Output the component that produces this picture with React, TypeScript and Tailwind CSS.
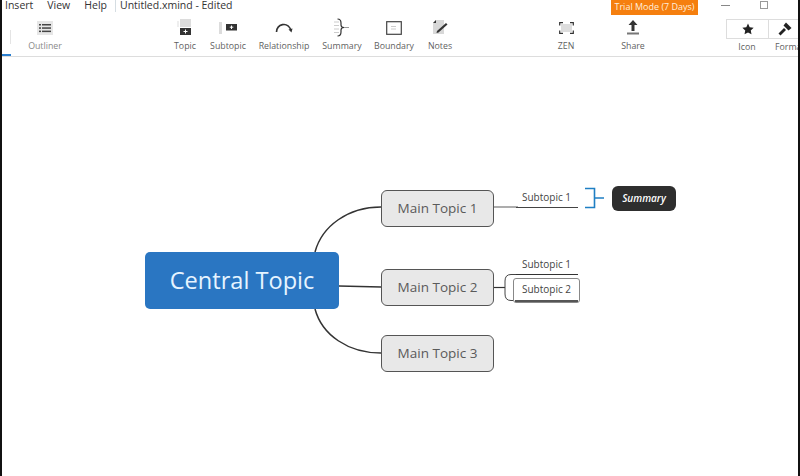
const ui = { fontFamily: '"Open Sans", "Noto Sans", sans-serif' };

function Tool({ label, width, icon, dim }: { label: string; width: string; icon: React.ReactNode; dim?: boolean }) {
  return (
    <div className={`flex flex-col items-center shrink-0 ${width}`}>
      <div className="h-[21px] flex items-center justify-center">{icon}</div>
      <span className={`text-[8.8px] leading-[13px] mt-[2px] whitespace-nowrap ${dim ? "text-[#8a8a8a]" : "text-[#5f5f5f]"}`}>{label}</span>
    </div>
  );
}

function MainTopic({ label, className }: { label: string; className: string }) {
  return (
    <div className={`absolute left-[379px] w-[113px] h-[37px] rounded-[6px] border border-[#555] bg-[#e8e8e8] flex items-center justify-center pb-[1px] text-[13.5px] text-[#5a5a5a] ${className}`}>
      {label}
    </div>
  );
}

export default function App() {
  return (
    <div className="w-[800px] h-[476px] overflow-hidden bg-white flex flex-col border-l-2 border-r-2 border-[#111]" style={ui}>
      <div className="h-[17px] shrink-0 flex items-start text-[10.5px] leading-[11px] text-[#333] relative pl-[3px]">
        <span>Insert</span>
        <span className="ml-[14px]">View</span>
        <span className="ml-[14px]">Help</span>
        <span className="ml-[8px] w-px h-[12px] bg-[#d5dde2]"></span>
        <span className="ml-[4px]">Untitled.xmind - Edited</span>
        <div className="absolute left-[609px] top-0 w-[87px] h-[15px] bg-[#f57f0f] text-[#ffeedd] text-[9px] leading-[14px] text-center">Trial Mode (7 Days)</div>
        <div className="absolute left-[719px] top-[5px] w-[9px] h-px bg-[#888]"></div>
        <div className="absolute left-[758px] top-[1px] w-[8px] h-[8px] border border-[#999]"></div>
      </div>

      <div className="h-[40px] shrink-0 flex items-start border-b border-[#ddd] relative">
        <div className="absolute left-0 bottom-0 w-[9px] h-[2px] bg-[#2a7fd0]"></div>
        <div className="w-px h-[14px] bg-[#e4e4e4] mt-[13px] ml-[8px] shrink-0"></div>
        <div className="ml-[11px] shrink-0">
          <Tool label="Outliner" width="w-[46px]" dim icon={
            <svg width="16" height="14" viewBox="0 0 16 14"><rect width="16" height="14" fill="#e6e6e6" /><g fill="#444"><rect x="2" y="3" width="2" height="1.5" /><rect x="5" y="3" width="9" height="1.5" /><rect x="2" y="6.3" width="2" height="1.5" /><rect x="5" y="6.3" width="9" height="1.5" /><rect x="2" y="9.6" width="2" height="1.5" /><rect x="5" y="9.6" width="9" height="1.5" /></g></svg>
          } />
        </div>
        <div className="ml-[98px] shrink-0 flex">
          <Tool label="Topic" width="w-[38px]" icon={
            <svg width="16" height="17" viewBox="0 0 16 17"><rect x="3" y="0" width="11" height="8" fill="#dcdcdc" /><rect x="0" y="2" width="2" height="6" fill="#eee" /><rect x="3" y="9" width="11" height="7" fill="#333" /><path d="M8.5 10.5v4M6.5 12.5h4" stroke="#fff" /></svg>
          } />
          <Tool label="Subtopic" width="w-[48px]" icon={
            <svg width="18" height="12" viewBox="0 0 18 12"><rect x="0" y="0" width="3" height="12" fill="#dcdcdc" /><rect x="7" y="2" width="11" height="6.5" fill="#333" /><path d="M12.5 3.5v3.5M10.8 5.2h3.5" stroke="#fff" /></svg>
          } />
          <Tool label="Relationship" width="w-[64px]" icon={
            <svg width="18" height="11" viewBox="0 0 18 11" fill="none"><path d="M1.5 10 C2 2 12 -1 16 8" stroke="#333" strokeWidth="1.6" /><path d="M13.5 7.5 L17.5 6.5 L16.5 10.5Z" fill="#333" /></svg>
          } />
          <Tool label="Summary" width="w-[52px]" icon={
            <svg width="16" height="19" viewBox="0 0 16 19" fill="none"><path d="M0 4h5M0 7.5h5M0 11h5M0 14.5h5" stroke="#ccc" /><path d="M3.5 1 C6.5 1 7 2.5 7 5 V7 C7 8.5 8 9.5 10 9.5 C8 9.5 7 10.5 7 12 V14 C7 16.5 6.5 18 3.5 18" stroke="#333" strokeWidth="1.2" /><path d="M10 9.5h5" stroke="#999" /></svg>
          } />
          <Tool label="Boundary" width="w-[52px]" icon={
            <svg width="16" height="14" viewBox="0 0 16 14" fill="none"><rect x="0.7" y="0.7" width="14.6" height="12.6" stroke="#444" strokeWidth="1.2" /><path d="M5 5.5h5M5 8h5" stroke="#ccc" /></svg>
          } />
          <Tool label="Notes" width="w-[40px]" icon={
            <svg width="15" height="15" viewBox="0 0 15 15"><path d="M3 0 H11 V14 H0 V3Z" fill="#d8d8d8" /><path d="M3 0 V3 H0Z" fill="#333" /><path d="M4 11 L13 3 L14.5 4.5 L5.5 12.5 L3.5 13Z" fill="#333" /></svg>
          } />
        </div>
        <div className="ml-[86px] shrink-0 flex gap-[27px]">
          <Tool label="ZEN" width="w-[40px]" icon={
            <svg width="15" height="12" viewBox="0 0 15 12" fill="none"><rect x="2" y="2" width="11" height="8" fill="#ddd" /><path d="M0.7 3.5V0.7H4M11 0.7h3.3V3.5M0.7 8.5v2.8H4M11 11.3h3.3V8.5" stroke="#333" strokeWidth="1.2" /></svg>
          } />
          <Tool label="Share" width="w-[40px]" icon={
            <svg width="12" height="15" viewBox="0 0 12 15"><path d="M6 0 L10.5 5 H7.5 V11 H4.5 V5 H1.5Z" fill="#333" /><rect x="0" y="12.5" width="12" height="2" fill="#777" /></svg>
          } />
        </div>
        <div className="absolute left-[724px] top-[2px] w-[74px] flex flex-col">
          <div className="h-[20px] flex border border-r-0 border-[#ddd]">
            <div className="w-[42px] border-r border-[#ddd] flex items-center justify-center">
              <svg width="12" height="12" viewBox="0 0 24 24" fill="#222"><path d="M12 1l3.4 7.3 7.9 1-5.8 5.5 1.5 7.9L12 18.8l-7 3.9 1.5-7.9L.7 9.3l7.9-1z" /></svg>
            </div>
            <div className="flex-1 flex items-center justify-center">
              <svg width="14" height="14" viewBox="0 0 14 14" fill="#222"><path d="M8 0.5 L13.5 6 L10.5 8.5 L5.5 3.5Z" /><path d="M6 6 L8 8 L2.5 13.5 L0.5 11.5Z" /></svg>
            </div>
          </div>
          <div className="flex text-[8.8px] leading-[13px] text-[#5f5f5f] mt-[2px] overflow-hidden">
            <span className="w-[42px] shrink-0 text-center">Icon</span>
            <span className="ml-[7px] shrink-0 whitespace-nowrap">Format</span>
          </div>
        </div>
      </div>

      <div className="relative flex-1">
        <svg className="absolute left-[-2px] top-0" width="800" height="419" viewBox="0 57 800 419" fill="none">
          <path d="M315 252 C322 226 348 207 381 207" stroke="#333" strokeWidth="1.5" />
          <path d="M315 309 C322 335 348 353 381 353" stroke="#333" strokeWidth="1.5" />
          <path d="M339 286 L381 287" stroke="#333" strokeWidth="1.5" />
          <path d="M494 207 H518" stroke="#777" strokeWidth="1.2" />
          <path d="M516 207.5 H578" stroke="#444" strokeWidth="1.2" />
          <path d="M494 287.5 H505" stroke="#333" strokeWidth="1.2" />
          <path d="M516 274.5 H578" stroke="#333" strokeWidth="1.2" />
          <path d="M516 274.5 H511 Q505 274.5 505 281 V294 Q505 300.5 511 300.5 H516" stroke="#444" strokeWidth="1" />
          <path d="M585 188.5 H594.5 V207.5 H585 M594.5 198 H604" stroke="#1f7fc4" strokeWidth="1.6" />
        </svg>

        <div className="absolute left-[143px] top-[195px] w-[194px] h-[57px] rounded-[5px] bg-[#2a76c2] flex items-center justify-center text-[23.6px] text-[#e6f4ff]">
          Central Topic
        </div>

        <MainTopic label="Main Topic 1" className="top-[133px]" />
        <MainTopic label="Main Topic 2" className="top-[212px]" />
        <MainTopic label="Main Topic 3" className="top-[278px]" />

        <div className="absolute left-[520px] top-[132px] text-[10px] leading-[16px] text-[#444]">Subtopic 1</div>
        <div className="absolute left-[520px] top-[199px] text-[10px] leading-[16px] text-[#444]">Subtopic 1</div>

        <div className="absolute left-[511px] top-[221px] w-[67px] h-[25px] rounded-[3px] border border-[#888] bg-white flex flex-col">
          <div className="flex-1 mx-[1px] border-b-2 border-[#555] flex items-center justify-center text-[10px] text-[#444]">
            Subtopic 2
          </div>
        </div>

        <div className="absolute left-[610px] top-[129px] w-[64px] h-[25px] rounded-[6px] bg-[#2e2e2e] flex items-center justify-center text-[10px] italic font-semibold text-white">
          Summary
        </div>
      </div>
    </div>
  );
}
